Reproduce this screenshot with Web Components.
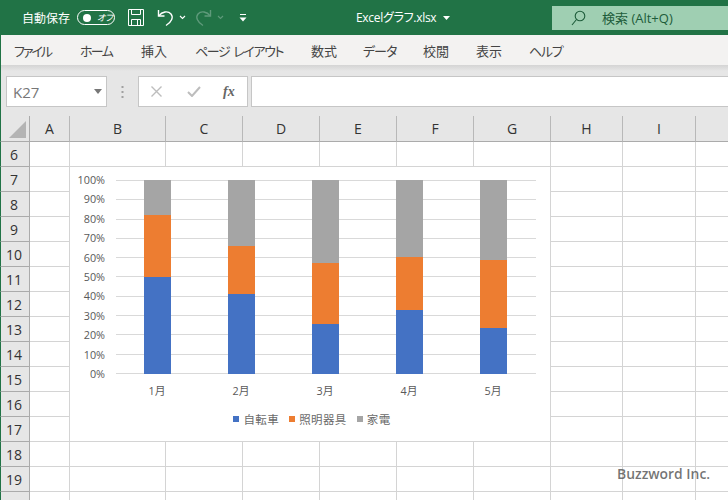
<!DOCTYPE html>
<html lang="ja">
<head>
<meta charset="utf-8">
<title>Excelグラフ.xlsx</title>
<style>
html, body { margin: 0; padding: 0; width: 728px; height: 500px; overflow: hidden; background: #fff; }
body { font-family: "Open Sans", "Noto Sans CJK JP", sans-serif; }
</style>
</head>
<body>
<excel-app>
  <title-bar></title-bar>
  <ribbon-tabs></ribbon-tabs>
  <formula-bar></formula-bar>
  <sheet-grid>
    <stacked-chart></stacked-chart>
    <span class="mark" slot="mark">Buzzword Inc.</span>
  </sheet-grid>
</excel-app>

<script>
const CJK = `"Open Sans", "Noto Sans CJK JP", sans-serif`;

class ExcelApp extends HTMLElement {
  constructor() {
    super();
    this.attachShadow({ mode: "open" }).innerHTML = `
    <style>
      :host { display: flex; flex-direction: column; width: 728px; height: 500px; overflow: hidden; }
    </style>
    <slot></slot>`;
  }
}

class TitleBar extends HTMLElement {
  constructor() {
    super();
    this.attachShadow({ mode: "open" }).innerHTML = `
    <style>
      :host { display: flex; align-items: center; height: 35px; flex: none; background: #217346; color: #fff;
        font: 12px ${CJK}; font-feature-settings: "palt"; position: relative; }
      .auto { margin-left: 22px; width: 48px; white-space: nowrap; }
      .toggle { margin-left: 7px; width: 36px; height: 13px; border: 1px solid #fff; border-radius: 8px;
        display: flex; align-items: center; font-size: 9px; }
      .toggle i { width: 8px; height: 8px; border-radius: 50%; background: #fff; margin-left: 5px; }
      .toggle span { margin-left: 6px; font-style: italic; }
      svg { display: block; flex: none; }
      .save { margin-left: 13px; }
      .undo { margin-left: 13px; }
      .file { position: absolute; left: 356px; top: 9px; white-space: nowrap; line-height: 17px; letter-spacing: -.3px; }
      .file svg { position: absolute; left: 87px; top: 7px; }
      .search { position: absolute; left: 552px; top: 6px; width: 176px; height: 24px; background: #9fcfb2;
        color: #1d5c3a; display: flex; align-items: center; }
      .search svg { margin-left: 19px; }
      .search span { margin-left: 16px; white-space: nowrap; font-size: 13px; position: relative; top: -1px; }
    </style>
    <span class="auto">自動保存</span>
    <span class="toggle"><i></i><span>オフ</span></span>
    <svg class="save" width="16" height="17" viewBox="0 0 16 17" fill="none" stroke="#fff" stroke-width="1">
      <path d="M.5.5h15v16H.5z"/><path d="M3.5.5v5h9v-5M3.5 16.5v-6h9v6M9.5 11v5"/>
    </svg>
    <svg class="undo" width="17" height="18" viewBox="0 0 17 18" fill="none" stroke="#fff" stroke-width="1.4">
      <path d="M1.5 1v6h6"/><path d="M1.8 6.8 C5 2.5 11 1.5 14 5 C16.5 8 15 13 9 16.5"/>
    </svg>
    <svg style="margin-left:5px" width="7" height="5" viewBox="0 0 7 5" fill="none" stroke="#fff" stroke-width="1.1"><path d="M1 1l2.5 2.5L6 1"/></svg>
    <svg style="margin-left:9px" width="17" height="18" viewBox="0 0 17 18" fill="none" stroke="#5f9a7b" stroke-width="1.4">
      <path d="M15.5 1v6h-6"/><path d="M15.2 6.8 C12 2.5 6 1.5 3 5 C.5 8 2 13 8 16.5"/>
    </svg>
    <svg style="margin-left:5px" width="7" height="5" viewBox="0 0 7 5" fill="none" stroke="#5f9a7b" stroke-width="1.1"><path d="M1 1l2.5 2.5L6 1"/></svg>
    <svg style="margin-left:15px" width="8" height="8" viewBox="0 0 8 8" fill="#fff"><path d="M1 0h6v1H1zM.5 3.5h7L4 7.5z"/></svg>
    <span class="file">Excelグラフ.xlsx<svg width="7" height="4" viewBox="0 0 7 4" fill="#fff"><path d="M0 0h7L3.5 4z"/></svg></span>
    <div class="search">
      <svg width="15" height="16" viewBox="0 0 15 16" fill="none" stroke="#1d5c3a" stroke-width="1.1">
        <circle cx="9" cy="6" r="4.8"/><path d="M5.5 9.5L1 15"/>
      </svg>
      <span>検索 (Alt+Q)</span>
    </div>`;
  }
}

class RibbonTabs extends HTMLElement {
  constructor() {
    super();
    // label, slot width, letter-spacing: the kana in the reference run narrower than the font's
    const tabs = [["ファイル", 39, -2], ["ホーム", 34, -1.7], ["挿入", 27, 0], ["ページ レイアウト", 89, -1.4], ["数式", 25, 0],
      ["データ", 33, -1], ["校閲", 26, 0], ["表示", 26, 0], ["ヘルプ", 32, -1.3]];
    this.attachShadow({ mode: "open" }).innerHTML = `
    <style>
      :host { display: flex; align-items: center; gap: 27px; height: 30px; flex: none; box-sizing: border-box;
        padding: 0 0 0 13px; background: #f3f2f1; border-left: 1px solid #217346; color: #444;
        font: 13px ${CJK}; font-feature-settings: "palt"; white-space: nowrap; word-spacing: 2px; }
      span { flex: none; }
    </style>
    ${tabs.map(t => `<span style="width:${t[1]}px;letter-spacing:${t[2]}px">${t[0]}</span>`).join("")}`;
  }
}

class FormulaBar extends HTMLElement {
  constructor() {
    super();
    this.attachShadow({ mode: "open" }).innerHTML = `
    <style>
      :host { display: flex; height: 51px; flex: none; box-sizing: border-box; padding: 11px 0 9px 6px;
        background: linear-gradient(#d4d4d4, #e6e6e6 6px); border-left: 1px solid #217346; font: 15px ${CJK}; }
      .box { background: #fff; border: 1px solid #c6c6c6; box-sizing: border-box; height: 31px; display: flex; align-items: center; }
      .name { width: 101px; margin-left: -1px; padding-left: 6px; color: #777; position: relative; }
      .name svg { position: absolute; right: 4px; top: 12px; }
      .dots { width: 31px; display: flex; align-items: center; justify-content: center; }
      .btns { width: 110px; }
      .btns svg { display: block; flex: none; }
      .fx { font: italic bold 14px "Liberation Serif", serif; color: #666; margin-left: 22px; }
      .input { flex: 1; margin-left: 3px; border-right: 0; }
    </style>
    <div class="box name">K27<svg width="8" height="5" viewBox="0 0 8 5" fill="#777"><path d="M0 0h8L4 5z"/></svg></div>
    <div class="dots"><svg width="3" height="12" viewBox="0 0 3 12" fill="#a0a0a0"><path d="M.5 0h2v2h-2zM.5 5h2v2h-2zM.5 10h2v2h-2z"/></svg></div>
    <div class="box btns">
      <svg style="margin-left:12px" width="11" height="11" viewBox="0 0 11 11" fill="none" stroke="#bdbdbd" stroke-width="1.4"><path d="M.5.5l10 10M10.5.5l-10 10"/></svg>
      <svg style="margin-left:25px" width="14" height="11" viewBox="0 0 14 11" fill="none" stroke="#bdbdbd" stroke-width="2"><path d="M1 6l4 4 8-9"/></svg>
      <span class="fx">fx</span>
    </div>
    <div class="box input"></div>`;
  }
}

class SheetGrid extends HTMLElement {
  constructor() {
    super();
    const cols = [["A", 40], ["B", 96], ["C", 77], ["D", 77], ["E", 77], ["F", 77], ["G", 77], ["H", 72], ["I", 73], ["", 33]];
    const rows = [6, 7, 8, 9, 10, 11, 12, 13, 14, 15, 16, 17, 18, 19, 20];
    const head = cols.map(c => `<div class="ch">${c[0]}</div>`).join("");
    const body = rows.map(r => `<div class="rh">${r}</div>` + cols.map(() => `<div class="c"></div>`).join("")).join("");
    this.attachShadow({ mode: "open" }).innerHTML = `
    <style>
      :host { display: block; position: relative; flex: 1; min-height: 0; overflow: hidden; }
      .grid { display: grid; grid-template-columns: 30px ${cols.map(c => c[1] + "px").join(" ")};
        grid-template-rows: 26px repeat(${rows.length}, 25px); font: 14px ${CJK}; color: #333; }
      .corner, .ch, .rh { background: #e6e6e6; box-sizing: border-box; }
      .corner { position: relative; border-right: 1px solid #ababab; border-bottom: 1px solid #ababab; border-left: 1px solid #217346; }
      .corner::after { content: ""; position: absolute; right: 3px; bottom: 3px; border-style: solid; border-width: 0 0 17px 17px;
        border-color: transparent transparent #b4b4b4 transparent; }
      .ch { display: flex; align-items: center; justify-content: center; border-right: 1px solid #b8b8b8; border-bottom: 1px solid #ababab; }
      .rh { display: flex; align-items: center; justify-content: center; padding-right: 2px; border-right: 1px solid #ababab;
        border-bottom: 1px solid #ababab; border-left: 1px solid #217346; }
      .c { box-sizing: border-box; border-right: 1px solid #d4d4d4; border-bottom: 1px solid #d4d4d4; }
      ::slotted(stacked-chart) { position: absolute; left: 70px; top: 51px; }
      ::slotted(.mark) { position: absolute; left: 617px; top: 348px; font: 600 13.9px "Open Sans", sans-serif;
        color: rgba(85, 85, 85, .82); white-space: nowrap; }
    </style>
    <div class="grid"><div class="corner"></div>${head}${body}</div>
    <slot></slot>
    <slot name="mark"></slot>`;
  }
}

class StackedChart extends HTMLElement {
  constructor() {
    super();
    // [blue, orange, grey] as percent of each month
    const data = [["1月", 50, 32], ["2月", 41.5, 24.5], ["3月", 26, 31], ["4月", 33, 27.5], ["5月", 23.5, 35.5]];
    const ticks = [100, 90, 80, 70, 60, 50, 40, 30, 20, 10, 0];
    this.attachShadow({ mode: "open" }).innerHTML = `
    <style>
      :host { display: block; width: 480px; height: 274px; box-sizing: border-box; background: #fff; padding: 13px 14px 0 0;
        font: 10.8px "Open Sans", "Noto Sans CJK JP", sans-serif; color: #595959; }
      .plot { display: flex; height: 194px; }
      .axis { width: 35px; display: flex; flex-direction: column; justify-content: space-between; text-align: right; margin-top: -7px; height: 208px; flex: none; }
      .axis span { line-height: 14px; }
      .area { flex: 1; margin-left: 11px; position: relative; display: flex; }
      .lines { position: absolute; inset: 0; display: flex; flex-direction: column; justify-content: space-between; }
      .lines i { display: block; height: 1px; background: #d9d9d9; }
      .cat { flex: 1; display: flex; justify-content: center; position: relative; }
      .bar { width: 27px; height: 100%; margin-right: 1px; display: flex; flex-direction: column-reverse; }
      .labels { display: flex; margin: 5px 0 0 46px; height: 22px; align-items: center; }
      .labels span { flex: 1; text-align: center; margin-right: 2px; }
      .legend { display: flex; justify-content: center; align-items: center; margin: 10px 0 0 28px; font-size: 11.5px; letter-spacing: .4px; color: #6a6a6a; }
      .legend i { width: 6px; height: 6px; margin-right: 4px; }
      .legend span { margin-right: 10px; }
    </style>
    <div class="plot">
      <div class="axis">${ticks.map(t => `<span>${t}%</span>`).join("")}</div>
      <div class="area">
        <div class="lines">${ticks.map(() => "<i></i>").join("")}</div>
        ${data.map(d => `<div class="cat"><div class="bar">
          <div style="height:${d[1]}%;background:#4472c4"></div>
          <div style="height:${d[2]}%;background:#ed7d31"></div>
          <div style="flex:1;background:#a5a5a5"></div>
        </div></div>`).join("")}
      </div>
    </div>
    <div class="labels">${data.map(d => `<span>${d[0]}</span>`).join("")}</div>
    <div class="legend">
      <i style="background:#4472c4"></i><span>自転車</span>
      <i style="background:#ed7d31"></i><span>照明器具</span>
      <i style="background:#a5a5a5"></i><span>家電</span>
    </div>`;
  }
}

customElements.define("excel-app", ExcelApp);
customElements.define("title-bar", TitleBar);
customElements.define("ribbon-tabs", RibbonTabs);
customElements.define("formula-bar", FormulaBar);
customElements.define("sheet-grid", SheetGrid);
customElements.define("stacked-chart", StackedChart);
</script>
</body>
</html>
